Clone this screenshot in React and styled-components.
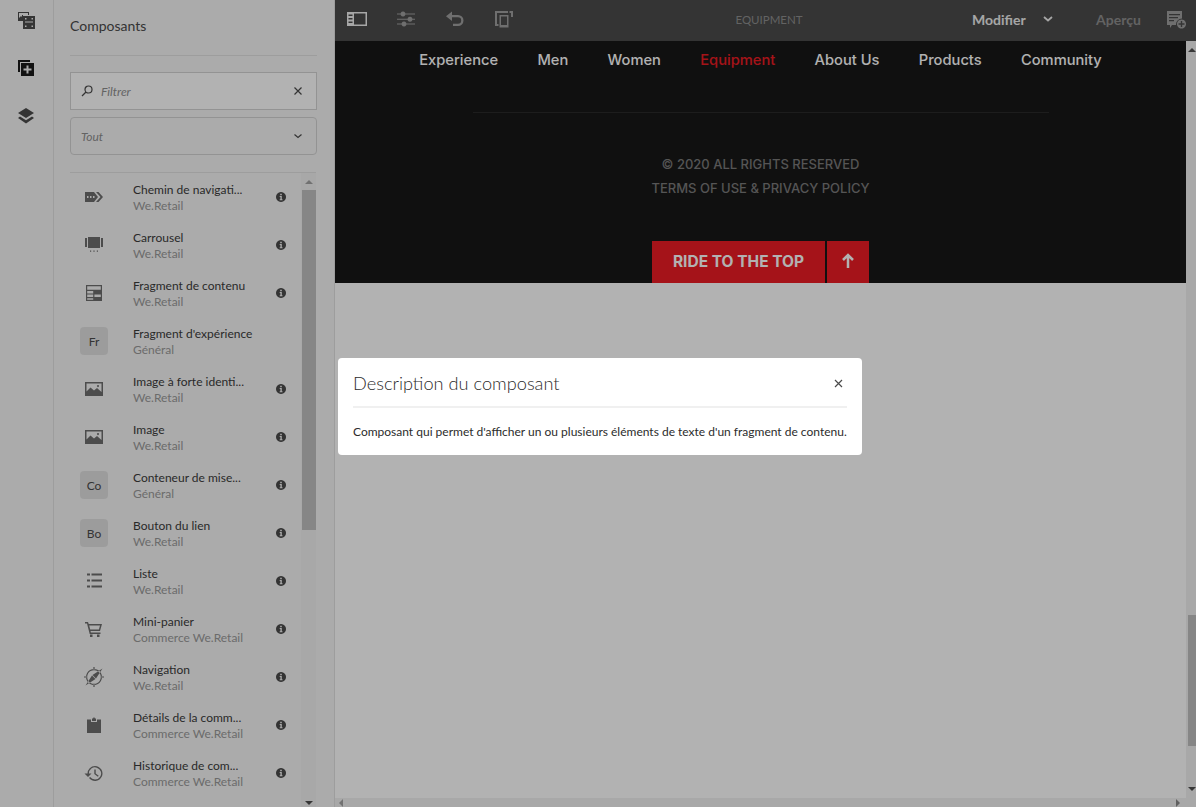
import React from "react";
import styled, { createGlobalStyle } from "styled-components";

const GlobalStyle = createGlobalStyle`
  html, body {
    margin: 0;
    height: 100%;
    overflow: hidden;
    font-family: "Lato", "Noto Sans", sans-serif;
    background: #fff;
  }
  * { box-sizing: border-box; }
`;

const Shell = styled.div`
  display: flex;
  height: 100vh;
  overflow: hidden;
`;

const Rail = styled.nav`
  width: 54px;
  flex: none;
  display: flex;
  flex-direction: column;
  align-items: center;
  gap: 24px;
  padding: 8px 1px 0 0;
  background: #f5f5f5;
  border-right: 1px solid #e1e1e1;
`;

const RailIcon = styled.svg`
  width: 18px;
  height: 24px;
  fill: ${(p) => (p.$active ? "#1b1b1b" : "#4b4b4b")};
`;

const Panel = styled.aside`
  width: 281px;
  flex: none;
  display: flex;
  flex-direction: column;
  padding-left: 16px;
  background: #f5f5f5;
  border-right: 1px solid #e1e1e1;
  overflow: hidden;
`;

const PanelTitle = styled.h2`
  margin: 0 17px 16px 0;
  height: 56px;
  padding-top: 17px;
  font-size: 14px;
  line-height: 18px;
  font-weight: 400;
  color: #4b4b4b;
  border-bottom: 1px solid #e1e1e1;
`;

const Field = styled.div`
  height: 38px;
  margin: 0 17px 7px 0;
  display: flex;
  align-items: center;
  border: 1px solid #d3d3d3;
  background: ${(p) => (p.$select ? "#f5f5f5" : "#fff")};
  border-radius: ${(p) => (p.$select ? "4px" : "0")};
  padding: 0 13px 0 10px;
  font-size: 12px;
  font-style: italic;
  color: #8e8e8e;
`;

const FieldLabel = styled.span`
  flex: 1;
`;

const Search = styled.svg`
  width: 12px;
  height: 12px;
  margin-right: 8px;
  fill: none;
  stroke: #4b4b4b;
  stroke-width: 1.2;
`;

const SmallGlyph = styled.svg`
  width: 10px;
  height: 10px;
  fill: none;
  stroke: ${(p) => p.$color || "#4b4b4b"};
  stroke-width: ${(p) => p.$weight || 1.2};
`;

const ListArea = styled.div`
  position: relative;
  flex: 1;
  margin: 10px 18px 0 0;
  border-top: 1px solid #e1e1e1;
  overflow: hidden;
`;

const Row = styled.div`
  height: 48px;
  display: flex;
  align-items: center;
  padding-right: 30px;
`;

const IconSlot = styled.div`
  width: 63px;
  flex: none;
  display: flex;
  justify-content: flex-end;
  padding-right: 29px;
`;

const Badge = styled.div`
  width: 28px;
  height: 28px;
  margin-right: -4px;
  border-radius: 4px;
  background: #e0e0e0;
  color: #4b4b4b;
  display: flex;
  align-items: center;
  justify-content: center;
  font-size: 12px;
`;

const RowIcon = styled.svg`
  width: 20px;
  height: 20px;
  fill: #6e6e6e;
`;

const RowText = styled.div`
  flex: 1;
  min-width: 0;
  padding-top: 2px;
  white-space: nowrap;
  font-size: 12px;
  line-height: 16px;
`;

const RowTitle = styled.div`
  color: #3b3b3b;
`;

const RowSub = styled.div`
  color: #9a9a9a;
`;

const InfoIcon = styled.svg`
  width: 10px;
  height: 10px;
  flex: none;
  fill: #4b4b4b;
`;

const Scroll = styled.div`
  position: absolute;
  top: 0;
  right: 0;
  bottom: 0;
  width: 15px;
  background: #f1f1f1;
`;

const ScrollThumb = styled.div`
  position: absolute;
  top: 17px;
  left: 1px;
  right: 0;
  height: 340px;
  background: #c1c1c1;
`;

const Arrow = styled.div`
  position: absolute;
  ${(p) => (p.$down ? "bottom: 2px" : "top: 7px")};
  left: 4px;
  border-left: 4px solid transparent;
  border-right: 4px solid transparent;
  ${(p) => (p.$down ? "border-top: 4px solid #505050" : "border-bottom: 4px solid #a3a3a3")};
`;

const Main = styled.main`
  flex: 1;
  min-width: 0;
  display: flex;
  flex-direction: column;
`;

const Toolbar = styled.header`
  height: 41px;
  flex: none;
  display: flex;
  align-items: center;
  padding: 0 10px 3px 12px;
  background: #4b4b4b;
`;

const ToolGroup = styled.div`
  display: flex;
  align-items: center;
  gap: 29px;
`;

const ToolIcon = styled.svg`
  width: 20px;
  height: 20px;
  flex: none;
  fill: ${(p) => (p.$dim ? "#a0a0a0" : "#f0f0f0")};
`;

const ToolTitle = styled.div`
  flex: 1;
  text-align: center;
  padding-left: 52px;
  font-size: 11.5px;
  color: #8e8e8e;
`;

const Modifier = styled.div`
  display: flex;
  align-items: center;
  gap: 17px;
  width: 124px;
  font-size: 14px;
  font-weight: 700;
  color: #eee;
`;

const Preview = styled.div`
  width: 70px;
  font-size: 14px;
  font-weight: 700;
  color: #8e8e8e;
`;

const Body = styled.div`
  flex: 1;
  min-height: 0;
  display: flex;
  position: relative;
`;

const Page = styled.div`
  flex: 1;
  min-width: 0;
`;

const Dark = styled.section`
  height: 242px;
  background: #181818;
  display: flex;
  flex-direction: column;
  align-items: center;
`;

const SiteNav = styled.div`
  display: flex;
  gap: 39.3px;
  padding-top: 9px;
  height: 71px;
  font-family: "Inter", sans-serif;
  font-size: 14.7px;
  font-weight: 500;
  line-height: 20px;
`;

const SiteLink = styled.span`
  color: ${(p) => (p.$active ? "#ed1c24" : "#fff")};
`;

const Rule = styled.div`
  width: 576px;
  height: 1px;
  background: #2a2a2a;
`;

const Legal = styled.div`
  margin-top: 39px;
  font-family: "Inter", sans-serif;
  font-size: 13px;
  font-weight: 500;
  line-height: 24px;
  text-align: center;
  color: #7a7a7a;
`;

const Actions = styled.div`
  margin-top: auto;
  display: flex;
  gap: 2px;
`;

const RideButton = styled.div`
  width: ${(p) => (p.$square ? "42px" : "173px")};
  height: 42px;
  padding-bottom: 2px;
  display: flex;
  align-items: center;
  justify-content: center;
  background: #ed1c24;
  color: #fff;
  font-family: "Inter", sans-serif;
  font-weight: 700;
  font-size: 15.5px;
`;

const VScroll = styled.div`
  width: 10px;
  flex: none;
  position: relative;
  background: #f1f1f1;
`;

const VThumb = styled.div`
  position: absolute;
  top: 574px;
  left: 2px;
  right: 0;
  height: 131px;
  background: #c1c1c1;
`;

const VArrow = styled.div`
  position: absolute;
  ${(p) => (p.$down ? "bottom: 16px" : "top: 7px")};
  left: 2px;
  border-left: 4px solid transparent;
  border-right: 4px solid transparent;
  ${(p) => (p.$down ? "border-top: 4px solid #505050" : "border-bottom: 4px solid #505050")};
`;

const HScroll = styled.div`
  position: absolute;
  left: 0;
  right: 0;
  bottom: 0;
  height: 9px;
  background: #f1f1f1;
`;

const HArrow = styled.div`
  position: absolute;
  ${(p) => (p.$right ? "right: 16px" : "left: 4px")};
  bottom: 0;
  border-top: 4px solid transparent;
  border-bottom: 4px solid transparent;
  ${(p) => (p.$right ? "border-left: 4px solid #8a8a8a" : "border-right: 4px solid #a3a3a3")};
`;

const Overlay = styled.div`
  position: fixed;
  inset: 0;
  display: flex;
  align-items: center;
  justify-content: center;
  padding: 6px 0 0 4px;
  background: rgba(0, 0, 0, 0.3);
`;

const Dialog = styled.div`
  width: 524px;
  height: 97px;
  padding: 0 15px;
  background: #fff;
  border-radius: 4px;
`;

const DialogHead = styled.div`
  height: 50px;
  padding-top: 2px;
  display: flex;
  align-items: center;
  justify-content: space-between;
  border-bottom: 2px solid #f0f0f0;
`;

const DialogTitle = styled.div`
  font-size: 18.2px;
  font-weight: 300;
  color: #2c2c2c;
`;

const DialogClose = styled.svg`
  width: 9px;
  height: 9px;
  margin-right: 4px;
  fill: none;
  stroke: #4b4b4b;
  stroke-width: 1.2;
`;

const DialogText = styled.p`
  margin: 16px 0 0;
  font-size: 12px;
  line-height: 16px;
  white-space: nowrap;
  color: #2c2c2c;
`;

const picture = "M1 3h18v14H1z M2.500 4.500v8l4-4 3.500 3 3-2.500 4.500 4v-8.500z M14 6a1 1 0 1 0 .01 0z";

const glyphs = {
  breadcrumb: "M1 5h9l4 5-4 5H1z M3 9v2h1.500V9z M6 9v2h1.500V9z M9 9v2h1.500V9z M12 5h2.500l4.500 5-4.500 5H12l4.500-5z",
  carousel: "M4 2h12v11H4z M1 3h2v9H1z M17 3h2v9h-2z M6 15.500h1.200v1.200H6z M9.400 15.500h1.200v1.200H9.400z M12.800 15.500H14v1.200h-1.200z",
  fragment: "M2 2h16v16H2z M3.200 3.200v3.600h13.600V3.200z M3.200 8v2.400h6V8z M3.200 11.600V14h6v-2.400z M10.400 11.600V14h6.400v-2.400z M3.200 15.200v1.600h6v-1.600z",
  list: "M3 2.500h3v2H3z M7.500 2.500H18v2H7.500z M3 8.500h3v2H3z M7.500 8.500H18v2H7.500z M3 14.500h3v2H3z M7.500 14.500H18v2H7.500z",
  cart: "M1 3h3l.7 2H18l-2 7H6.500l.4 1.500h9.600V15H5.700L3 4.500H1z M5.200 6.500l1 4h8.700l1.100-4z M6 15.500h2.500V18H6z M13 15.500h2.500V18H13z",
  nav: "M10 2a8 8 0 1 0 .01 0z M10 3.200a6.800 6.800 0 1 1-.01 0z M18.500 1.500L12 11.500 8.500 8z M1.500 18.500L8 8.500l3.500 3.500z M9.400 0h1.200v2.500H9.400z M9.400 17.500h1.200V20H9.400z M0 9.400h2.500v1.200H0z M17.500 9.400H20v1.200h-2.500z",
  order: "M3 4.500h4V7h6V4.500h4V18H3z M8 3.500h1L10 2l1 1.500h1V6H8z",
  history: "M11 3a7.500 7.500 0 1 1-6 12l1.100-.9A6.100 6.100 0 1 0 4.900 10.500H7.500L4 14 .5 10.500h3A7.500 7.500 0 0 1 11 3z M10.300 6.500h1.400v4l3 2.200-.8 1.100-3.600-2.700z",
};

const items = [
  { title: "Chemin de navigati...", sub: "We.Retail", icon: glyphs.breadcrumb },
  { title: "Carrousel", sub: "We.Retail", icon: glyphs.carousel },
  { title: "Fragment de contenu", sub: "We.Retail", icon: glyphs.fragment },
  { title: "Fragment d'expérience", sub: "Général", badge: "Fr", noInfo: true },
  { title: "Image à forte identi...", sub: "We.Retail", icon: picture },
  { title: "Image", sub: "We.Retail", icon: picture },
  { title: "Conteneur de mise...", sub: "Général", badge: "Co" },
  { title: "Bouton du lien", sub: "We.Retail", badge: "Bo" },
  { title: "Liste", sub: "We.Retail", icon: glyphs.list },
  { title: "Mini-panier", sub: "Commerce We.Retail", icon: glyphs.cart },
  { title: "Navigation", sub: "We.Retail", icon: glyphs.nav },
  { title: "Détails de la comm...", sub: "Commerce We.Retail", icon: glyphs.order },
  { title: "Historique de com...", sub: "Commerce We.Retail", icon: glyphs.history },
];

const links = ["Experience", "Men", "Women", "Equipment", "About Us", "Products", "Community"];

export default function App() {
  return (
    <>
      <GlobalStyle />
      <Shell>
        <Rail>
          <RailIcon viewBox="0 0 18 18">
            <path fillRule="evenodd" d="M1 1h11v3H6v6H1z M2 2v5l2-2 1 1V4h6V2z M6 5h12v13H6z M8 7v1.500h1.500V7z M8 10.500v1h8v-1z M8 14.500V16h1.500v-1.500z M14.500 7v1.500H16V7z M14.500 14.500V16H16v-1.500z" />
          </RailIcon>
          <RailIcon $active viewBox="0 0 18 18">
            <path fillRule="evenodd" d="M1 1h12v2H3v10H1z M4 4h13v13H4z M9.500 6.500v3h-3v2h3v3h2v-3h3v-2h-3v-3z" />
          </RailIcon>
          <RailIcon viewBox="0 0 18 18">
            <path d="M9 1l8 5-8 5-8-5z M3 9.500l6 3.700 6-3.700 2 1.500-8 5.500L1 11z" />
          </RailIcon>
        </Rail>

        <Panel>
          <PanelTitle>Composants</PanelTitle>
          <Field>
            <Search viewBox="0 0 12 12">
              <circle cx="7.500" cy="4.500" r="3.500" />
              <path d="M5 7l-4 4" />
            </Search>
            <FieldLabel>Filtrer</FieldLabel>
            <SmallGlyph viewBox="0 0 10 10">
              <path d="M1.500 1.500l7 7M8.500 1.500l-7 7" />
            </SmallGlyph>
          </Field>
          <Field $select>
            <FieldLabel>Tout</FieldLabel>
            <SmallGlyph viewBox="0 0 10 10">
              <path d="M1.500 3.500L5 6.500l3.500-3" />
            </SmallGlyph>
          </Field>
          <ListArea>
            {items.map((item) => (
              <Row key={item.title}>
                <IconSlot>
                  {item.badge ? (
                    <Badge>{item.badge}</Badge>
                  ) : (
                    <RowIcon viewBox="0 0 20 20">
                      <path fillRule="evenodd" d={item.icon} />
                    </RowIcon>
                  )}
                </IconSlot>
                <RowText>
                  <RowTitle>{item.title}</RowTitle>
                  <RowSub>{item.sub}</RowSub>
                </RowText>
                {!item.noInfo && (
                  <InfoIcon viewBox="0 0 10 10">
                    <path fillRule="evenodd" d="M5 0a5 5 0 1 0 .01 0z M4.200 1.700h1.600v1.500H4.200z M3.700 4h2.100v3.300h.7v1H3.700v-1h.7V5h-.7z" />
                  </InfoIcon>
                )}
              </Row>
            ))}
            <Scroll>
              <Arrow />
              <ScrollThumb />
              <Arrow $down />
            </Scroll>
          </ListArea>
        </Panel>

        <Main>
          <Toolbar>
            <ToolGroup>
              <ToolIcon viewBox="0 0 20 20">
                <path fillRule="evenodd" d="M0 3h20v14H0z M7 4.500v11h11.500v-11z M1.500 5.500v1.500h4V5.500z M1.500 9v1.500h4V9z M1.500 12.500V14h4v-1.500z" />
              </ToolIcon>
              <ToolIcon $dim viewBox="0 0 20 20">
                <path d="M1 4.500h18v1H1z M1 9.700h18v1H1z M1 14.500h18v1H1z M7 2.500a2.500 2.500 0 1 1-.01 0z M14 7.700a2.500 2.500 0 1 1-.01 0z M8 12.500a2.500 2.500 0 1 1-.01 0z" />
              </ToolIcon>
              <ToolIcon $dim viewBox="0 0 20 20">
                <path d="M7 2.500V6h6a5.500 5.500 0 0 1 0 11H8v-2.300h5a3.200 3.200 0 0 0 0-6.400H7V12L1 7.200z" />
              </ToolIcon>
              <ToolIcon $dim viewBox="0 0 20 20">
                <path fillRule="evenodd" d="M1 2h13v2H3v11h1.500v2H1z M15.500 2H19v6h-2V4h-1.500z M5.500 6h9v12.500h-9z M7 7.500V16h6V7.500z" />
              </ToolIcon>
            </ToolGroup>
            <ToolTitle>EQUIPMENT</ToolTitle>
            <Modifier>
              Modifier
              <SmallGlyph viewBox="0 0 10 10" $color="#eee" $weight={1.8}>
                <path d="M1 3l4 3.500L9 3" />
              </SmallGlyph>
            </Modifier>
            <Preview>Aperçu</Preview>
            <ToolIcon $dim viewBox="0 0 20 20">
              <path fillRule="evenodd" d="M1 2h15v7.500a6 6 0 0 0-6 6.500H6l-2 3v-3H1z M3 5v1.200h11V5z M3 8v1.200h9V8z M3 11v1.200h5V11z M15.500 10.500a4.500 4.500 0 1 0 .01 0z M14.800 12h1.400v2.300h2.300v1.400h-2.300V18h-1.400v-2.300h-2.300v-1.400h2.300z" />
            </ToolIcon>
          </Toolbar>
          <Body>
            <Page>
              <Dark>
                <SiteNav>
                  {links.map((link) => (
                    <SiteLink key={link} $active={link === "Equipment"}>{link}</SiteLink>
                  ))}
                </SiteNav>
                <Rule />
                <Legal>
                  © 2020 ALL RIGHTS RESERVED
                  <br />
                  TERMS OF USE &amp; PRIVACY POLICY
                </Legal>
                <Actions>
                  <RideButton>RIDE TO THE TOP</RideButton>
                  <RideButton $square>
                    <svg width="14" height="16" viewBox="0 0 14 16" fill="none" stroke="#fff" strokeWidth="2.500">
                      <path d="M7 15V2M2 7l5-5 5 5" />
                    </svg>
                  </RideButton>
                </Actions>
              </Dark>
            </Page>
            <VScroll>
              <VArrow />
              <VThumb />
              <VArrow $down />
            </VScroll>
            <HScroll>
              <HArrow />
              <HArrow $right />
            </HScroll>
          </Body>
        </Main>
      </Shell>

      <Overlay>
        <Dialog>
          <DialogHead>
            <DialogTitle>Description du composant</DialogTitle>
            <DialogClose viewBox="0 0 9 9">
              <path d="M1 1l7 7M8 1l-7 7" />
            </DialogClose>
          </DialogHead>
          <DialogText>
            Composant qui permet d'afficher un ou plusieurs éléments de texte d'un fragment de contenu.
          </DialogText>
        </Dialog>
      </Overlay>
    </>
  );
}
